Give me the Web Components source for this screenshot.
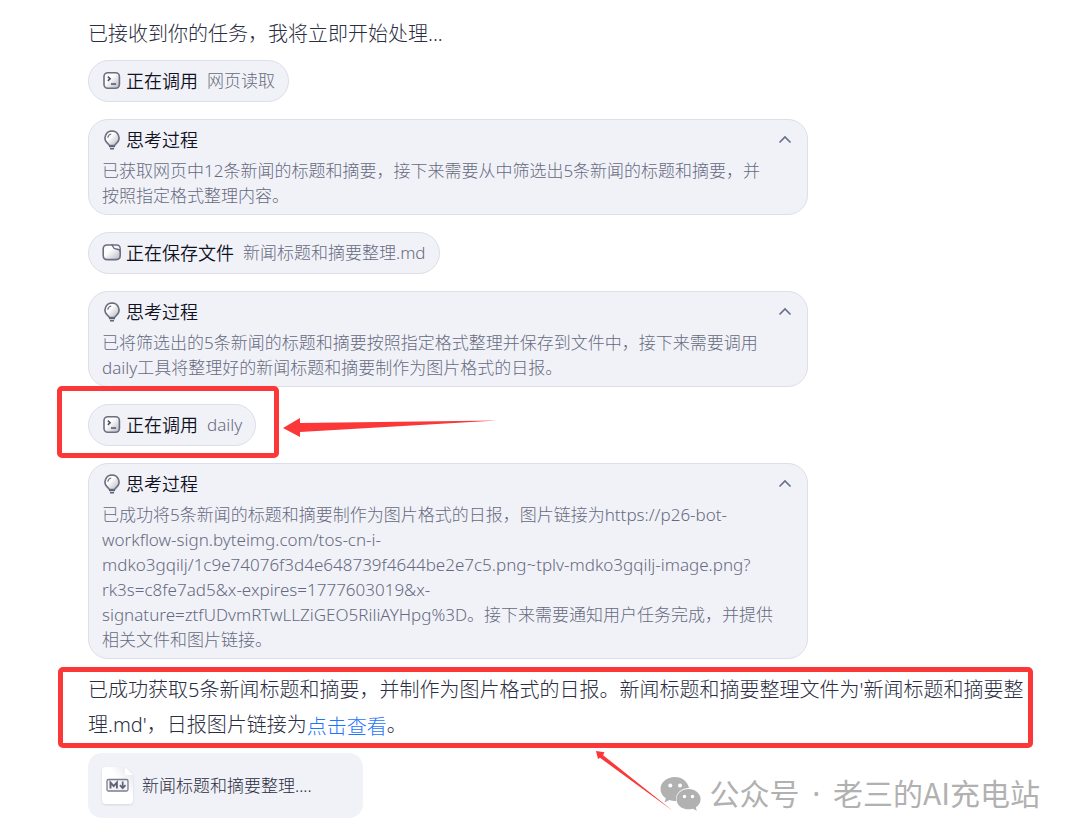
<!DOCTYPE html>
<html lang="zh-CN">
<head>
<meta charset="utf-8">
<meta name="viewport" content="width=device-width, initial-scale=1">
<title>任务处理</title>
<style>
  body {
    margin: 0;
    background: #fff;
    font-family: "Noto Sans", "Noto Sans CJK SC", sans-serif;
    font-weight: 300;
  }
</style>
</head>
<body>
<task-chat></task-chat>

<script>
const define = (name, html, setup) => {
  const template = document.createElement('template');
  template.innerHTML = html;
  customElements.define(name, class extends HTMLElement {
    constructor() {
      super();
      this.attachShadow({ mode: 'open' }).append(template.content.cloneNode(true));
    }
    connectedCallback() { if (setup) setup(this, this.shadowRoot); }
  });
};

const icons = {
  terminal: `<rect x="2" y="1.800" width="15.400" height="15.400" rx="3.800" fill="url(#g)" stroke="#6b6f80" stroke-width="1.600"/>
    <path d="M5.800 5.600l2.300 2.100-2.300 2.100M9 13h5" fill="none" stroke="#4f5366" stroke-width="1.600"/>`,
  folder: `<path d="M5 2h5.200l2.200 2.600h1.800c2.400 0 4 1 4 3v5c0 2.600-1.400 4-4 4H5.200c-2.400 0-4-1.400-4-4V6c0-2.500 1.400-4 3.800-4z" fill="url(#g)" stroke="#6b6f80" stroke-width="1.600"/>
    <path d="M10 2h4.600c2.400 0 3.600 1.400 3.600 4v2.400c-.8-1.800-2-2.400-4-2.400-2.200 0-2.600-.6-3-2z" fill="#f8f8fa" stroke="#6b6f80" stroke-width="1.300"/>`,
  bulb: `<path d="M10 1a7 7 0 0 0-4.600 12.200c1 .9 1.600 1.500 2 2.300h5.200c.4-.8 1-1.400 2-2.300A7 7 0 0 0 10 1z" fill="url(#g)" stroke="#6b6f80" stroke-width="1.600"/>
    <path d="M5.800 7.800C6 5.800 7.300 4.400 9.200 4" fill="none" stroke="#6b6f80" stroke-width="1.200"/>
    <path d="M7 16.400h6M8 18.800h4" fill="none" stroke="#5f6376" stroke-width="1.600"/>`
};

define('line-icon', `
<style>
  :host { display: block; flex: none; width: 19px; height: 20px; }
  svg { display: block; overflow: visible; }
</style>
<svg width="19" height="20" viewBox="0 0 19 20" aria-hidden="true">
  <defs><linearGradient id="g" x1="0" y1="0" x2="1" y2="1">
    <stop offset="0.400" stop-color="#fcfcfd"/><stop offset="1" stop-color="#b4b6c0"/>
  </linearGradient></defs>
  <g></g>
</svg>`, (host, root) => {
  root.querySelector('g').innerHTML = icons[host.getAttribute('name')] || '';
});

define('tool-pill', `
<style>
  :host {
    display: flex; align-items: center; box-sizing: border-box; width: fit-content; height: 42px;
    padding: 0 13px; border: 1px solid #dcdeea; border-radius: 21px; background: #f1f2f8;
    font-size: 17px; line-height: 24px; color: #666a80;
  }
  .label { margin: 0 9px 0 5px; font-size: 18px; font-weight: 350; color: #10121f; }
</style>
<line-icon></line-icon>
<span class="label"><slot name="label"></slot></span>
<span><slot></slot></span>`, (host, root) => {
  const icon = root.querySelector('line-icon');
  icon.setAttribute('name', host.getAttribute('icon'));
  icon.shadowRoot.querySelector('g').innerHTML = icons[host.getAttribute('icon')];
});

define('thought-card', `
<style>
  :host {
    display: block; box-sizing: border-box; max-width: 720px; padding: 8px 8px 6px 13px;
    border: 1px solid #dcdeea; border-radius: 20px; background: #f1f2f8;
  }
  header { display: flex; align-items: center; height: 24px; padding-right: 4px; margin-bottom: 6px; }
  h2 { flex: 1; margin: 0 0 0 5px; font-size: 18px; line-height: 24px; font-weight: 350; color: #10121f; }
  button { display: block; padding: 0; border: 0; background: none; width: 20px; height: 20px; cursor: pointer; }
  svg { display: block; }
  p { margin: 0; font-size: 17px; line-height: 25px; color: #666a80; }
  .closed p { display: none; }
  .closed svg { transform: rotate(180deg); }
</style>
<section>
  <header>
    <line-icon name="bulb"></line-icon>
    <h2>思考过程</h2>
    <button type="button" aria-label="收起" aria-expanded="true">
      <svg width="20" height="20" viewBox="0 0 20 20" aria-hidden="true"><path d="M4.500 12.500L10 7l5.500 5.500" fill="none" stroke="#667085" stroke-width="1.600"/></svg>
    </button>
  </header>
  <p><slot></slot></p>
</section>`, (host, root) => {
  const button = root.querySelector('button');
  button.onclick = () => {
    const closed = root.querySelector('section').classList.toggle('closed');
    button.setAttribute('aria-expanded', String(!closed));
  };
});

define('file-card', `
<style>
  :host { display: block; max-width: 275px; }
  button {
    display: flex; align-items: center; width: 100%; height: 65px; padding: 0 14px; gap: 9px;
    border: 0; border-radius: 14px; background: #f1f2f8; color: #2b2e42;
    font-family: inherit; font-size: 17px; font-weight: 300; line-height: 24px; text-align: left; cursor: pointer;
  }
  svg { display: block; flex: none; overflow: visible; filter: drop-shadow(0 1px 1px #d4d6df); }
</style>
<button type="button">
  <svg width="31" height="37" viewBox="0 0 31 37" aria-hidden="true">
    <defs><linearGradient id="f" x1="0" y1="1" x2="1" y2="0">
      <stop offset="0.600" stop-color="#fff"/><stop offset="1" stop-color="#e0e1e6"/></linearGradient></defs>
    <path d="M4 0h19l8 8v25a4 4 0 0 1-4 4H4a4 4 0 0 1-4-4V4a4 4 0 0 1 4-4z" fill="url(#f)"/>
    <path d="M23 0l8 8h-6a2 2 0 0 1-2-2z" fill="#fff"/>
    <rect x="5" y="12.500" width="21" height="11.500" rx="1.500" fill="#f4f4f7" stroke="#7a7e91" stroke-width="1.300"/>
    <path d="M8.500 21.500v-6l3.200 3.600 3.200-3.600v6" fill="none" stroke="#5f6378" stroke-width="1.900"/>
    <path d="M20.700 14.500v6M17.900 18.200l2.800 3 2.800-3" fill="none" stroke="#5f6378" stroke-width="1.700"/>
  </svg>
  <span><slot></slot></span>
</button>`);

/* Red marker frame round its slotted content; the offsets come from custom properties. */
define('marked-area', `
<style>
  :host { display: block; position: relative; }
  .frame {
    position: absolute; inset: var(--frame-inset); border: 5px solid #fb3737; border-radius: 5px; pointer-events: none;
  }
  ::slotted([slot="arrow"]) { position: absolute; pointer-events: none; }
</style>
<slot></slot><div class="frame"></div><slot name="arrow"></slot>`);

define('account-mark', `
<style>
  :host { display: flex; align-items: center; gap: 8px; color: #b1b1b1; font: 400 30px/40px "Noto Sans CJK SC", sans-serif; white-space: pre; }
  svg { display: block; flex: none; }
  ::slotted(span) { padding: 0 6px; font-family: "Noto Sans", sans-serif; }
</style>
<svg width="41" height="35" viewBox="0 0 41 35" aria-hidden="true">
  <path d="M15 1C7 1 .500 6.200 .500 13c0 3.800 2 7 5.300 9.300L4.500 26.500l5-2.500c1.700.5 3.500.9 5.500.9h1.300c-1.600-6.800 4.400-13 12.700-13C27.600 5.600 22 1 15 1z" fill="#b1b1b1"/>
  <circle cx="10.300" cy="9.500" r="2" fill="#fff"/><circle cx="20" cy="9.500" r="2" fill="#fff"/>
  <path d="M28.500 13c-6.700 0-12 4.500-12 10.200s5.300 10.100 12 10.100c1.500 0 3-.2 4.300-.6l4 2-1-3.500c3-1.900 4.800-4.700 4.800-8C40.600 17.500 35.200 13 28.500 13z" fill="#b1b1b1"/>
  <circle cx="24.500" cy="20.500" r="1.700" fill="#fff"/><circle cx="32.500" cy="20.500" r="1.700" fill="#fff"/>
</svg>
<div><slot></slot></div>`);

define('task-chat', `
<style>
  :host { display: block; position: relative; }
  main { padding: 16px 40px 16px 88px; }
  .message { margin: 0; font-size: 20px; line-height: 35px; color: #2b2e42; }
  .steps { display: flex; flex-direction: column; gap: 17px; margin: 9px 0 13px; }
  .call { width: fit-content; --frame-inset: -18px -23px -12px -31px; }
  .call svg { left: calc(100% + 27px); top: 14px; }
  .summary { --frame-inset: -5px -1px -6px -30px; }
  .summary svg { left: 508px; top: 79px; }
  file-card { margin-top: 11px; }
  a { color: #1f75ff; line-height: 24px; text-decoration: none; vertical-align: middle; }
  account-mark { position: absolute; right: 32px; bottom: 20px; }
</style>
<main>
  <p class="message">已接收到你的任务，我将立即开始处理...</p>
  <div class="steps">
    <tool-pill icon="terminal"><span slot="label">正在调用</span>网页读取</tool-pill>
    <thought-card>已获取网页中12条新闻的标题和摘要，接下来需要从中筛选出5条新闻的标题和摘要，并<br>按照指定格式整理内容。</thought-card>
    <tool-pill icon="folder"><span slot="label">正在保存文件</span>新闻标题和摘要整理.md</tool-pill>
    <thought-card>已将筛选出的5条新闻的标题和摘要按照指定格式整理并保存到文件中，接下来需要调用<br>daily工具将整理好的新闻标题和摘要制作为图片格式的日报。</thought-card>
    <marked-area class="call">
      <tool-pill icon="terminal"><span slot="label">正在调用</span>daily</tool-pill>
      <svg slot="arrow" width="214" height="20" viewBox="0 0 214 20" aria-hidden="true"><path d="M0 10L17 0v5L214 2.500 17 14v5z" fill="#fb3737"/></svg>
    </marked-area>
    <thought-card>已成功将5条新闻的标题和摘要制作为图片格式的日报，图片链接为https://p26-bot-<br>workflow-sign.byteimg.com/tos-cn-i-<br>mdko3gqilj/1c9e74076f3d4e648739f4644be2e7c5.png~tplv-mdko3gqilj-image.png?<br>rk3s=c8fe7ad5&amp;x-expires=1777603019&amp;x-<br>signature=ztfUDvmRTwLLZiGEO5RiliAYHpg%3D。接下来需要通知用户任务完成，并提供<br>相关文件和图片链接。</thought-card>
  </div>
  <marked-area class="summary">
    <p class="message">已成功获取5条新闻标题和摘要，并制作为图片格式的日报。新闻标题和摘要整理文件为'新闻标题和摘要整理.md'，日报图片链接为<a href="#view">点击查看</a>。</p>
    <svg slot="arrow" width="78" height="61" viewBox="0 0 78 61" aria-hidden="true"><path d="M0 0l8.500 1.200-1.400 3L77 60 4 6.800 2 8z" fill="#fb3737"/></svg>
  </marked-area>
  <file-card>新闻标题和摘要整理....</file-card>
</main>
<account-mark>公众号 <span>·</span> 老三的AI充电站</account-mark>`);
</script>
</body>
</html>
